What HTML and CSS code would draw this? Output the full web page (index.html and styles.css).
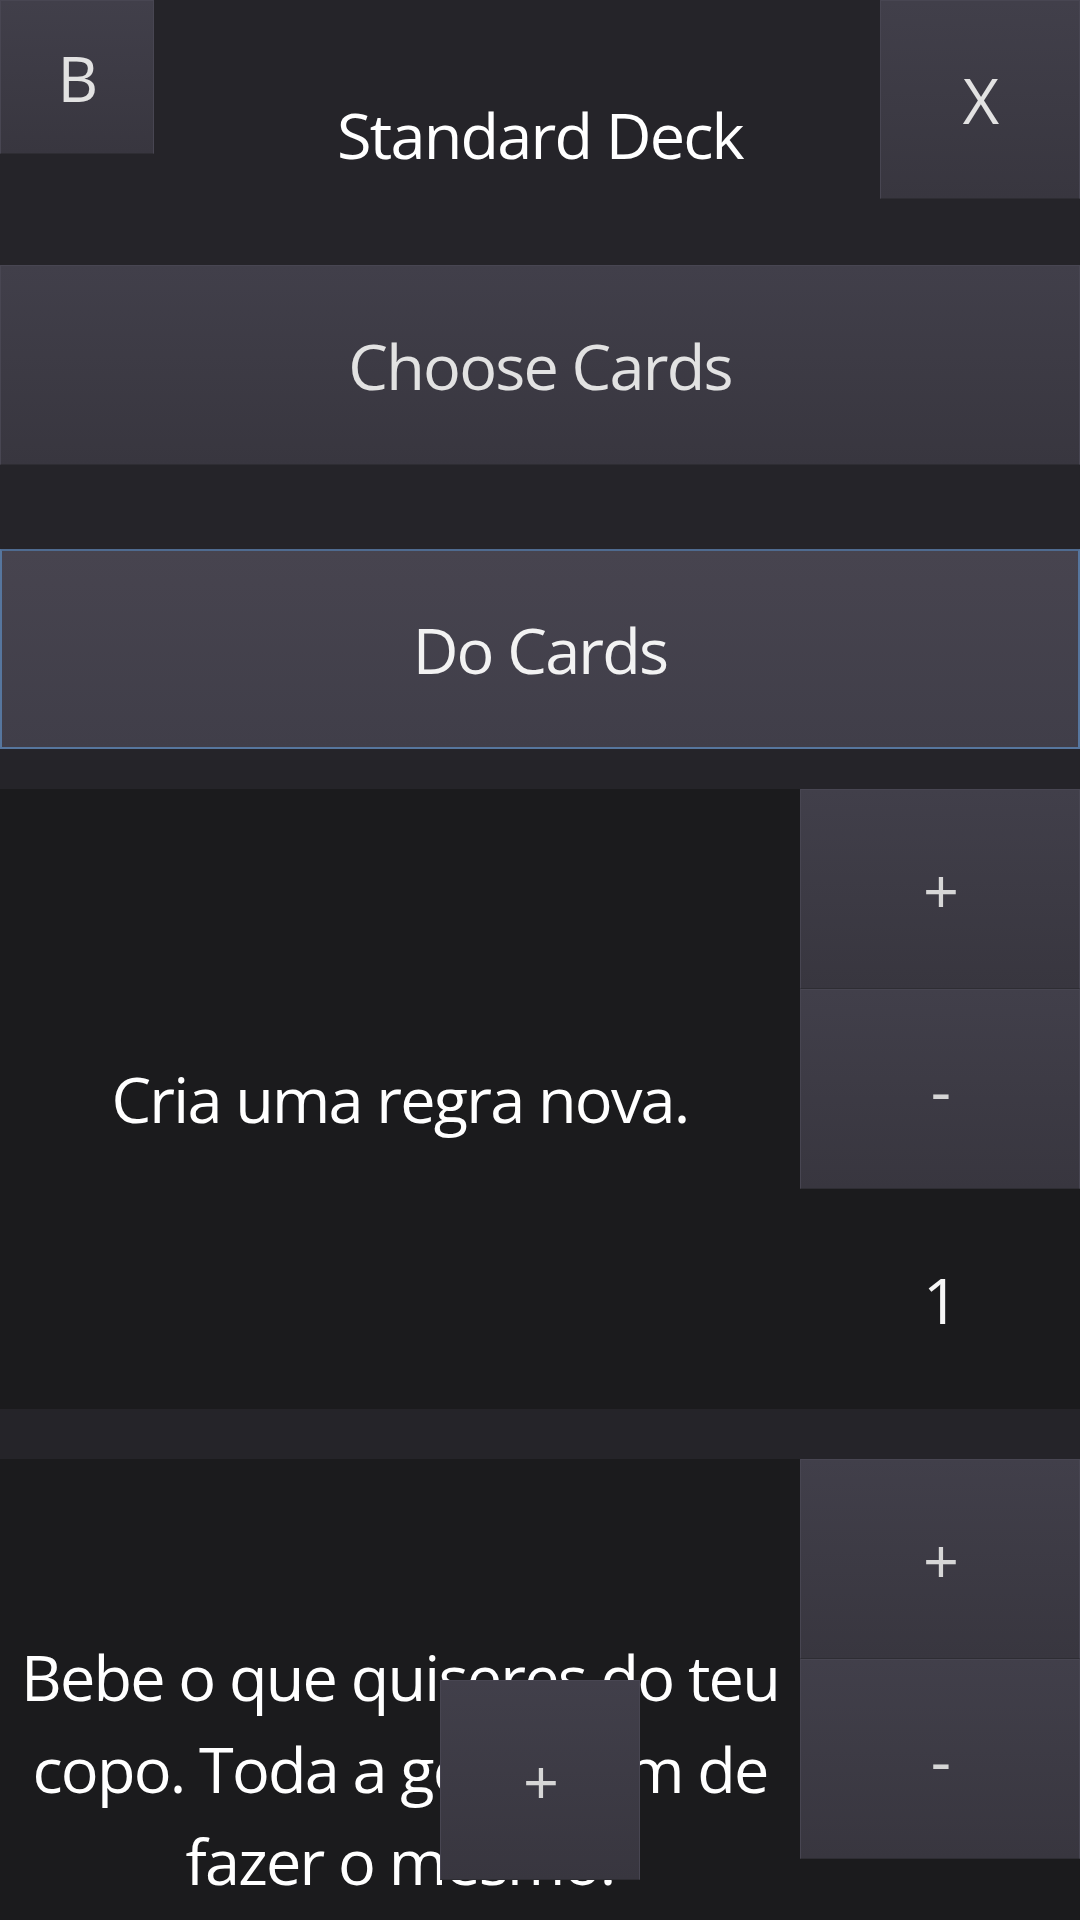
FILE: index.html
```html
<!DOCTYPE html>
<html lang="pt">
<head>
<meta charset="utf-8">
<title>Standard Deck</title>
<link rel="stylesheet" href="styles.css">
</head>
<body>
<div class="app">
  <header class="topbar">
    <button class="btn btn-back">B</button>
    <h1 class="title">Standard Deck</h1>
    <button class="btn btn-close">X</button>
  </header>
  <button class="btn btn-wide btn-choose">Choose Cards</button>
  <button class="btn btn-wide btn-do is-focused">Do Cards</button>
  <ul class="card-list">
    <li class="card">
      <p class="card-text">Cria uma regra nova.</p>
      <div class="card-controls">
        <button class="btn btn-step">+</button>
        <button class="btn btn-step">-</button>
        <span class="count">1</span>
      </div>
    </li>
    <li class="card">
      <p class="card-text">Bebe o que quiseres do teu copo. Toda a gente tem de fazer o mesmo.</p>
      <div class="card-controls">
        <button class="btn btn-step">+</button>
        <button class="btn btn-step">-</button>
        <span class="count">1</span>
      </div>
    </li>
  </ul>
  <button class="btn btn-add">+</button>
</div>
</body>
</html>
```

FILE: styles.css
```css
html, body {
  margin: 0;
  padding: 0;
}

body {
  width: 1080px;
  height: 1920px;
  overflow: hidden;
  background: #252429;
  font-family: "Open Sans", "Noto Sans", sans-serif;
  font-size: 63px;
  letter-spacing: -1.8px;
  color: #f4f4f4;
}

.app {
  display: flex;
  flex-direction: column;
  width: 1080px;
}

.btn {
  box-sizing: border-box;
  margin: 0;
  padding: 0;
  font: inherit;
  letter-spacing: inherit;
  color: #e2e2e2;
  background: linear-gradient(to bottom, #413f4a, #38363f);
  border: 1px solid #484652;
  border-bottom-color: #2e2d33;
  border-radius: 0;
  display: flex;
  align-items: center;
  justify-content: center;
}

.topbar {
  height: 265px;
  display: grid;
  grid-template-columns: 1fr auto 1fr;
  align-items: start;
}

.btn-back {
  justify-self: start;
  width: 154px;
  height: 154px;
}

.btn-close {
  justify-self: end;
  width: 200px;
  height: 199px;
}

.title {
  align-self: center;
  margin: 0;
  padding-top: 4px;
  font-size: 63px;
  font-weight: 400;
  color: #ffffff;
}

.btn-wide {
  width: 1080px;
  height: 200px;
}

.btn-choose {
  margin-bottom: 84px;
}

.btn-do {
  margin-bottom: 40px;
}

.is-focused {
  color: #f2f2f2;
  background: linear-gradient(to bottom, #47444f, #403e49);
  border: 2px solid #56769e;
  border-top-color: #4f6b90;
}

.card-list {
  list-style: none;
  margin: 0;
  padding: 0;
  display: flex;
  flex-direction: column;
  gap: 50px;
}

.card {
  display: flex;
  height: 620px;
  background: #1b1b1d;
}

.card-text {
  flex: 1;
  margin: 0;
  padding: 0 12px;
  align-self: center;
  text-align: center;
  line-height: 92px;
  color: #ffffff;
}

.card-controls {
  width: 280px;
  display: flex;
  flex-direction: column;
}

.btn-step {
  width: 280px;
  height: 200px;
  color: #d6d6d6;
}

.count {
  flex: 1;
  display: flex;
  align-items: center;
  justify-content: center;
  color: #f6f6f6;
}

.btn-add {
  position: fixed;
  left: 440px;
  bottom: 40px;
  width: 200px;
  height: 200px;
  color: #d6d6d6;
}
```
